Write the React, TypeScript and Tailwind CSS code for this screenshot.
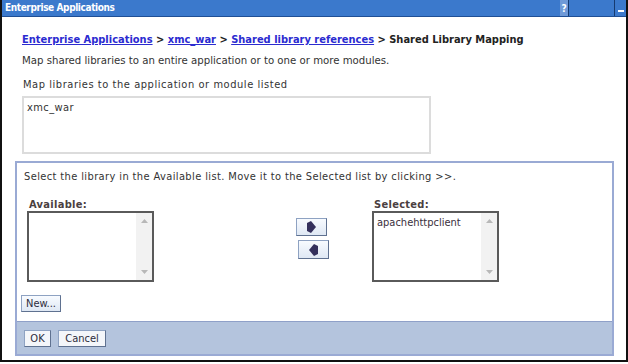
import React from 'react';

const font = { fontFamily: '"DejaVu Sans Condensed", "DejaVu Sans", Tahoma, sans-serif' };

function MoveArrow({ dir }: { dir: 'right' | 'left' }) {
  const pts = dir === 'right' ? '1,2 5,0 10,6 5,12 1,10' : '10,2 6,0 1,6 6,12 10,10';
  return (
    <svg width="11" height="12" viewBox="0 0 11 12">
      <polygon points={pts} fill="#34305c" />
    </svg>
  );
}

function ListBox({ items }: { items: string[] }) {
  return (
    <div className="flex h-[71px] w-[127px] border-2 border-[#5a5a5a] bg-white">
      <div className="flex-1 px-[3px] pt-[3px] text-[11px] leading-[13px] text-[#3a2f3c]">
        {items.map((it) => (
          <div key={it}>{it}</div>
        ))}
      </div>
      <div className="flex w-[16px] flex-col items-center justify-between bg-[#f2f2f2] py-[6px]">
        <svg width="7" height="4" viewBox="0 0 7 4"><polygon points="0,4 3.5,0 7,4" fill="#b8b8b8" /></svg>
        <svg width="7" height="4" viewBox="0 0 7 4"><polygon points="0,0 3.5,4 7,0" fill="#b8b8b8" /></svg>
      </div>
    </div>
  );
}

function Btn({ children, className = '' }: { children: React.ReactNode; className?: string }) {
  return (
    <div
      className={`flex items-center justify-center border border-[#8ea2c2] border-r-[#5f7190] border-b-[#5f7190] bg-gradient-to-b from-[#f8fbff] to-[#dfe8f4] text-[11px] leading-none text-[#2c2c3c] ${className}`}
    >
      {children}
    </div>
  );
}

export default function App() {
  return (
    <div className="h-[364px] w-[628px] bg-white" style={font}>
      <div className="flex h-[362px] w-[628px] flex-col border-x-2 border-b-2 border-[#111]">
        {/* title bar */}
        <div className="flex h-[17px] shrink-0 items-center border-b border-[#1f4f95] bg-[#3b79cc] text-white">
          <span className="flex-1 pl-[3px] text-[10px] font-bold leading-none tracking-[-0.4px]">Enterprise Applications</span>
          <span className="flex h-full w-[8px] items-center justify-center bg-[#6f9ad8] text-[10px] font-bold">?</span>
          <span className="h-full w-px bg-[#163a70]" />
          <span className="h-full w-[45px]" />
          <span className="h-full w-px bg-[#163a70]" />
          <span className="flex h-full w-[11px] items-end justify-center pb-[4px]">
            <span className="h-[2px] w-[6px] bg-white" />
          </span>
        </div>

        <div className="flex flex-1 flex-col pl-[13px] pr-[12px]">
          <div className="pl-[7px] pt-[16px] text-[11px] font-bold leading-[14px] text-[#222]">
            <a className="text-[#2b2bd0] underline">Enterprise Applications</a>
            {' > '}
            <a className="text-[#2b2bd0] underline">xmc_war</a>
            {' > '}
            <a className="text-[#2b2bd0] underline">Shared library references</a>
            {' > Shared Library Mapping'}
          </div>
          <div className="pl-[7px] pt-[7px] text-[11.3px] leading-[14px] text-[#333]">
            Map shared libraries to an entire application or to one or more modules.
          </div>
          <div className="pl-[8px] pt-[10px] text-[11px] leading-[14px] tracking-[0.55px] text-[#333]">
            Map libraries to the application or module listed
          </div>
          <div className="ml-[7px] mt-[4px] h-[58px] w-[409px] border-2 border-[#dcdcdc] px-[3px] pt-[3px] text-[11px] leading-[14px] tracking-[0.4px] text-[#333]">
            xmc_war
          </div>

          <div className="mt-[7px] flex flex-1 flex-col border-2 border-[#9aaad4]">
            <div className="pl-[7px] pt-[7px] text-[11px] leading-[14px] tracking-[0.38px] text-[#333]">
              Select the library in the Available list. Move it to the Selected list by clicking &gt;&gt;.
            </div>
            <div className="mt-[15px] flex">
              <div className="ml-[10px] flex flex-col">
                <span className="pl-[2px] text-[11px] font-bold leading-[12px] tracking-[0.3px] text-[#4a4040]">Available:</span>
                <ListBox items={[]} />
              </div>
              <div className="ml-[142px] mt-[19px] flex flex-col gap-[4px]">
                <Btn className="h-[18px] w-[31px]"><MoveArrow dir="right" /></Btn>
                <Btn className="ml-[2px] h-[19px] w-[31px]"><MoveArrow dir="left" /></Btn>
              </div>
              <div className="ml-[43px] flex flex-col">
                <span className="pl-[2px] text-[11px] font-bold leading-[12px] tracking-[0.3px] text-[#4a4040]">Selected:</span>
                <ListBox items={['apachehttpclient']} />
              </div>
            </div>
            <div className="flex-1" />
            <Btn className="mb-[9px] ml-[4px] h-[17px] w-[40px]">New...</Btn>
            <div className="flex h-[33px] shrink-0 items-center gap-[7px] border-t border-[#8fa0c8] bg-[#b4c4dd] pl-[7px]">
              <Btn className="h-[17px] w-[27px] bg-none bg-[#f4f6fa]">OK</Btn>
              <Btn className="h-[17px] w-[48px] bg-none bg-[#f4f6fa]">Cancel</Btn>
            </div>
          </div>
          <div className="h-[4px] shrink-0" />
        </div>
      </div>
    </div>
  );
}
